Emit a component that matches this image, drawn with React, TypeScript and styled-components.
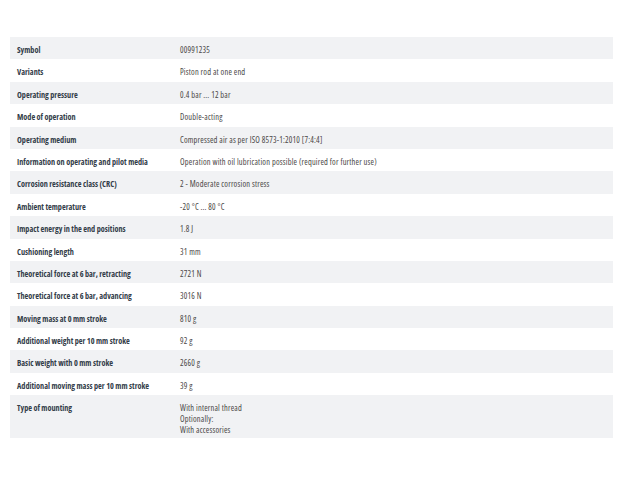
import React from "react";
import styled, { createGlobalStyle } from "styled-components";

const GlobalStyle = createGlobalStyle`
  html, body {
    margin: 0;
    padding: 0;
    background: #ffffff;
  }
`;

const rows: { label: string; value: string[] }[] = [
  { label: "Symbol", value: ["00991235"] },
  { label: "Variants", value: ["Piston rod at one end"] },
  { label: "Operating pressure", value: ["0.4 bar ... 12 bar"] },
  { label: "Mode of operation", value: ["Double-acting"] },
  { label: "Operating medium", value: ["Compressed air as per ISO 8573-1:2010 [7:4:4]"] },
  {
    label: "Information on operating and pilot media",
    value: ["Operation with oil lubrication possible (required for further use)"],
  },
  { label: "Corrosion resistance class (CRC)", value: ["2 - Moderate corrosion stress"] },
  { label: "Ambient temperature", value: ["-20 °C ... 80 °C"] },
  { label: "Impact energy in the end positions", value: ["1.8 J"] },
  { label: "Cushioning length", value: ["31 mm"] },
  { label: "Theoretical force at 6 bar, retracting", value: ["2721 N"] },
  { label: "Theoretical force at 6 bar, advancing", value: ["3016 N"] },
  { label: "Moving mass at 0 mm stroke", value: ["810 g"] },
  { label: "Additional weight per 10 mm stroke", value: ["92 g"] },
  { label: "Basic weight with 0 mm stroke", value: ["2660 g"] },
  { label: "Additional moving mass per 10 mm stroke", value: ["39 g"] },
  {
    label: "Type of mounting",
    value: ["With internal thread", "Optionally:", "With accessories"],
  },
];

export default function App() {
  return (
    <Page>
      <GlobalStyle />
      <Table>
        {rows.map((row, i) => (
          <Row key={row.label} striped={i % 2 === 0}>
            <Label>{row.label}</Label>
            <Value>
              {row.value.map((line) => (
                <Line key={line}>{line}</Line>
              ))}
            </Value>
          </Row>
        ))}
      </Table>
    </Page>
  );
}

const Page = styled.div`
  width: 640px;
  height: 480px;
  padding: 37px 27px 0 10px;
  box-sizing: border-box;
  font-family: "Open Sans", "DejaVu Sans", sans-serif;
  font-stretch: 75%;
`;

const Table = styled.div`
  display: flex;
  flex-direction: column;
`;

const Row = styled.div<{ striped: boolean }>`
  display: grid;
  grid-template-columns: 163px 1fr;
  background: ${(p) => (p.striped ? "#f1f2f4" : "#ffffff")};
  padding: 7px 7px 3px;
  min-height: 22.4px;
  box-sizing: border-box;
  line-height: 11px;
`;

const Label = styled.div`
  font-size: 8.2px;
  font-weight: 700;
  color: #333d49;
`;

const Value = styled.div`
  font-size: 8.4px;
  letter-spacing: 0.18px;
  color: #4a4746;
`;

const Line = styled.div``;
